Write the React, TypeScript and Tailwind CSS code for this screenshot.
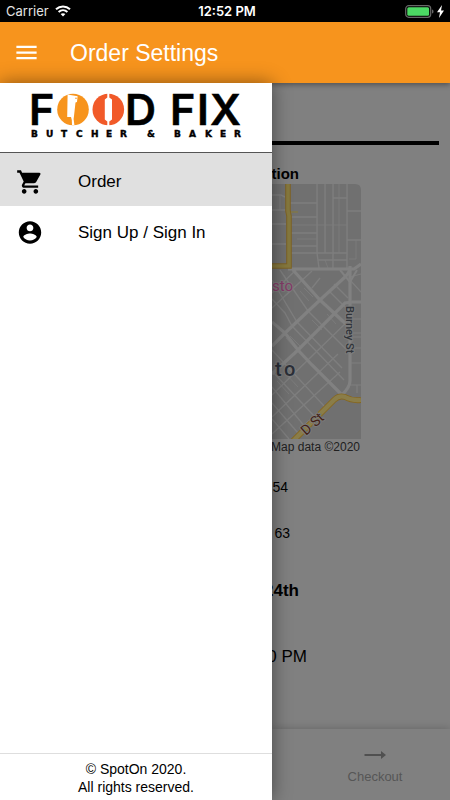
import { MdMenu } from "react-icons/md";

function StatusBar() {
  return (
    <div className="grid h-[22px] grid-cols-3 items-center bg-black px-1.5 font-[Inter,sans-serif] text-[13px] leading-[22px] text-white">
      <div className="flex items-center gap-1.5 text-[#e4e4e4]">
        <span>Carrier</span>
        <svg className="h-3 w-4" viewBox="0 0 16 12" fill="none" stroke="white" strokeWidth="2" aria-label="Wi-Fi">
          <path d="M1 4.3C5 .5 11 .5 15 4.3M3.6 7C6.2 4.7 9.8 4.7 12.4 7" />
          <path d="M8 11.6L5.6 9.1C7 7.9 9 7.9 10.4 9.1Z" fill="white" stroke="none" />
        </svg>
      </div>
      <span className="pl-1 text-center font-semibold whitespace-nowrap">12:52 PM</span>
      <div className="flex items-center justify-end gap-[3px]">
        <svg className="h-[13px] w-[29px]" viewBox="0 0 29 13" aria-label="Battery charging">
          <rect x=".7" y=".7" width="25" height="11.6" rx="3" fill="none" stroke="#686868" strokeWidth="1.2" />
          <rect x="2.3" y="2.3" width="21.8" height="8.4" rx="1.5" fill="#4cd964" />
          <path d="M27 4.5C29 5 29 8 27 8.5Z" fill="#686868" />
        </svg>
        <svg className="h-[13px] w-[7px]" viewBox="0 0 7 13" fill="white" aria-hidden="true">
          <path d="M5 0L0 7.2H3L2 13L7 5.4H4Z" />
        </svg>
      </div>
    </div>
  );
}

function CartIcon() {
  return (
    <svg className="size-7" viewBox="0 0 24 24" fill="currentColor" aria-hidden="true">
      <path d="M7 18c-1.1 0-1.99.9-1.99 2S5.9 22 7 22s2-.9 2-2-.9-2-2-2zM1 2v2h2l3.6 7.59-1.35 2.45c-.16.28-.25.61-.25.96 0 1.1.9 2 2 2h12v-2H7.42c-.14 0-.25-.11-.25-.25l.03-.12.9-1.63h7.45c.75 0 1.41-.41 1.75-1.03l3.58-6.49A1.003 1.003 0 0 0 20 4H5.21l-.94-2H1zm16 16c-1.1 0-1.99.9-1.99 2s.89 2 1.99 2 2-.9 2-2-.9-2-2-2z" />
    </svg>
  );
}

function AccountIcon() {
  return (
    <svg className="size-7" viewBox="0 0 25 25" fill="currentColor" aria-hidden="true">
      <path d="M12.5 2C6.98 2 2.5 6.48 2.5 12s4.48 10 10 10 10-4.48 10-10S18.02 2 12.5 2zm0 3c1.66 0 3 1.34 3 3s-1.34 3-3 3-3-1.34-3-3 1.34-3 3-3zm0 14.2c-2.5 0-4.71-1.28-6-3.22.03-1.99 4-3.08 6-3.08 1.99 0 5.97 1.09 6 3.08-1.29 1.94-3.5 3.22-6 3.22z" />
    </svg>
  );
}

function Logo() {
  return (
    <svg className="h-[46px] w-[214px] overflow-visible" viewBox="0 0 214 46" aria-label="Food Fix Butcher & Baker">
      <g fontFamily="Inter, sans-serif" fontWeight="600" fontSize="43" fill="#000" stroke="#000" strokeWidth=".5">
        <text x="-2" y="32">F</text>
        <text x="94" y="32">D</text>
        <text x="139" y="32">F</text>
        <text x="166" y="32">I</text>
        <text x="179" y="32">X</text>
      </g>
      <circle cx="42" cy="16.5" r="15.8" fill="#f7941d" />
      <path d="M36.6 1.5L46.6 3.2L46 9L44.5 9.5L43 23L42.6 26L43.4 32H41L40.8 27L40 24H36.2Z" fill="white" />
      <circle cx="45" cy="5.2" r=".8" fill="#f7941d" />
      <circle cx="77.3" cy="16.5" r="15.8" fill="#f15a29" />
      <path d="M76.3 0H78.3V4.5L81 6.5V26.5L78.3 28.5V33H76.3V28.5L73.8 26.5V6.5L76.3 4.5Z" fill="white" />
      <text
        x="0 15 30 45 60 75 89 100 116 130 143 158 174 189 203"
        y="44"
        fontFamily="DejaVu Sans, sans-serif"
        fontWeight="700"
        fontSize="9"
        stroke="#000"
        strokeWidth=".4"
      >
        BUTCHER & BAKER
      </text>
    </svg>
  );
}

function Drawer() {
  return (
    <aside className="relative z-20 flex w-[272px] shrink-0 flex-col bg-white shadow-[0_0_18px_rgba(0,0,0,0.45)]">
      <div className="flex h-[70px] items-start border-b border-[#555] pt-[10px] pl-[31px]">
        <Logo />
      </div>
      <nav className="flex flex-1 flex-col text-[17px]">
        <a href="#order" className="flex h-[53px] items-center gap-[34px] bg-[#e0e0e0] pt-1 pl-4">
          <CartIcon />
          Order
        </a>
        <a href="#account" className="flex h-[53px] items-center gap-[34px] pt-px pl-4">
          <AccountIcon />
          Sign Up / Sign In
        </a>
      </nav>
      <footer className="border-t border-[#dedede] pt-1.5 pb-1 text-center text-sm leading-[18px]">
        <p>© SpotOn 2020.</p>
        <p>All rights reserved.</p>
      </footer>
    </aside>
  );
}

function StreetMap() {
  return (
    <svg className="h-[272px] w-[89px] overflow-visible" viewBox="0 0 89 272" aria-label="Map">
      <clipPath id="map-area">
        <path d="M0 0H83Q89 0 89 6V255H0Z" />
      </clipPath>
      <g clipPath="url(#map-area)" fill="none">
        <path d="M0 0H89V255H0Z" fill="#707070" />
        <g stroke="#7e7e7e" strokeWidth="1.4">
          <path d="M0 11H9L13 13M0 26H14M0 40H14M0 60H14M18 19H45M18 33H45M18 49H45M18 62H45M18 69H75M46 76H75M61 14H75M75 27H89M75 56H89" />
          <path d="M45 0V69L47 84M53 0V69M61 0V84M75 0V84" />
          <path d="M8 11V26M18 41H75M25 55H45M67 0V69M84 56V75H77M53 76L56 84" strokeWidth=".7" />
          <path d="M0 109L24 86M0 124L40 87M0 211L78 135M0 233L66 170M0 250L68 188M30 243L58 218" />
          <path d="M8 86L36 127L74 165M0 96L25 138L70 184M0 115L13 129L20 142L72 196M0 166L53 223M0 187L43 233M0 203L34 244M0 219L26 249M0 235L17 255M40 104L48 94M62 100L76 114M50 118L70 138M58 108L76 126" />
          <path d="M28 107L37 117M32 104L41 113M14 154L24 165M18 152L30 164M40 136L50 146M55 130L64 140M14 190L26 203M5 197L17 210" strokeWidth=".8" />
          <path d="M78 93L89 90M78 96L89 108M78 135H89M78 149H89M78 153H89M78 164H89M78 179H89M78 201H89M85 201V209" strokeWidth="1.2" />
        </g>
        <g stroke="#818181" strokeWidth="3.2">
          <path d="M16 85H82L89 80M21 86L48 116L74 140M0 162L13 149L48 116L73 93Q76 90 78 86M0 190L26 166L73 119L80 118H89M0 138L13 149L26 166L40 181L70 211" />
          <path d="M78 82V197Q78 203 70 211" />
          <path d="M68 86L78 98L85 86" strokeWidth="2" />
        </g>
        <path d="M16 0V27L17 32V82H0" stroke="#7e6325" strokeWidth="5.6" />
        <path d="M16 0V27L17 32V82H0" stroke="#85783e" strokeWidth="3.6" />
        <path d="M19 28H26" stroke="#7c7552" strokeWidth="2" />
        <path d="M17 261L62 216Q67 211 73 213Q80 217 89 216" stroke="#866720" strokeWidth="6" />
        <path d="M17 261L62 216Q67 211 73 213Q80 217 89 216" stroke="#8a7d49" strokeWidth="4.2" />
      </g>
      <g fontFamily="Roboto, sans-serif" paintOrder="stroke" stroke="#7b7b7b" strokeWidth="2">
        <text x="0" y="107" fontSize="15" fill="#843c68">sto</text>
        <text x="3 12" y="192" fontSize="20" fontWeight="500" fill="#2b2f38">to</text>
        <text transform="translate(74 122) rotate(90)" fontSize="11" fontWeight="500" fill="#30343a">Burney St</text>
        <text transform="translate(34 252) rotate(-42)" fontSize="14" fill="#431f16">D St</text>
      </g>
      <text x="88" y="267" textAnchor="end" fontFamily="Liberation Sans, sans-serif" fontSize="12" fill="#202020">
        Map data ©2020
      </text>
    </svg>
  );
}

function OrderDetails() {
  return (
    <main className="flex min-w-0 flex-1 flex-col overflow-hidden bg-[#808080] pt-[58px]">
      <div className="mr-[11px] h-1 bg-black" />
      <h2 className="mt-5 mb-px flex h-[18px] w-[27px] justify-end text-[15px] leading-[18px] font-bold">tion</h2>
      <StreetMap />
      <p className="mt-[21px] flex w-4 justify-end text-sm">54</p>
      <p className="mt-[26px] flex w-[18px] justify-end text-sm">63</p>
      <p className="mt-9 flex w-[27px] justify-end text-[17px] leading-6 font-bold">24th</p>
      <p className="mt-[42px] flex w-[35px] justify-end text-[17px] leading-6 whitespace-nowrap">0 PM</p>
      <div className="mt-auto flex h-[71px] bg-[#808080] pl-7 shadow-[0_-1px_8px_rgba(0,0,0,0.18)]">
        <button className="flex flex-1 flex-col items-center pt-5 text-[13px] leading-[18px] text-[#565656]">
          <svg className="mb-[7px] h-3 w-[22px]" viewBox="0 0 22 12" aria-hidden="true">
            <path d="M.5 6H18" stroke="#505050" strokeWidth="2" />
            <path d="M17 2L22 6L17 10Z" fill="#505050" />
          </svg>
          Checkout
        </button>
      </div>
    </main>
  );
}

export default function App() {
  return (
    <div className="flex min-h-screen flex-col font-['Liberation_Sans',Arial,sans-serif] text-black">
      <StatusBar />
      <header className="relative z-10 flex h-[61px] items-center gap-[30px] bg-[#f7941d] pl-[13px] text-white shadow-[0_2px_5px_rgba(0,0,0,0.35)]">
        <button aria-label="Menu">
          <MdMenu size={27} />
        </button>
        <h1 className="text-[23px] leading-7">Order Settings</h1>
      </header>
      <div className="flex flex-1">
        <Drawer />
        <OrderDetails />
      </div>
    </div>
  );
}
